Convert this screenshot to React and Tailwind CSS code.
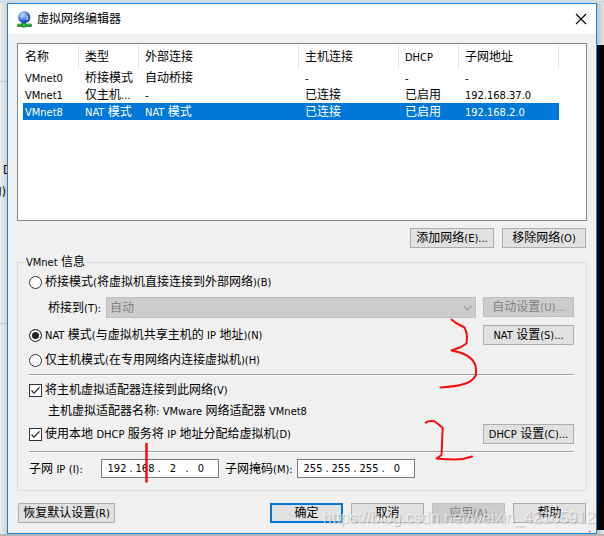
import React, { useState } from 'react'

const COLUMNS = [
  { label: '名称', width: 'w-[56px]' },
  { label: '类型', width: 'w-[60px]' },
  { label: '外部连接', width: 'w-[160px]' },
  { label: '主机连接', width: 'w-[100px]' },
  { label: 'DHCP', width: 'w-[60px]' },
  { label: '子网地址', width: 'w-[100px]' },
]

const NETWORKS = [
  ['VMnet0', '桥接模式', '自动桥接', '-', '-', '-'],
  ['VMnet1', '仅主机...', '-', '已连接', '已启用', '192.168.37.0'],
  ['VMnet8', 'NAT 模式', 'NAT 模式', '已连接', '已启用', '192.168.2.0'],
]

// latin runs are set one size below the chinese ones
function Txt({ children }) {
  return children.split(/([\x21-\x7e]+)/).map((part, i) =>
    i % 2 ? <span key={i} className="text-[11px] leading-none">{part}</span> : part
  )
}

function Button({ children, className = 'w-[84px]', disabled, primary }) {
  const look = disabled
    ? 'border border-[#bfbfbf] bg-[#cccccc] text-[#838383]'
    : primary
      ? 'border-2 border-[#0078d7] bg-[#e1e1e1]'
      : 'border border-[#adadad] bg-[#e1e1e1]'
  return (
    <button disabled={disabled} className={`flex h-5 shrink-0 items-center justify-center whitespace-nowrap ${look} ${className}`}>
      <span><Txt>{children}</Txt></span>
    </button>
  )
}

function Radio({ label, value, mode, setMode }) {
  return (
    <label className="flex h-5 items-center gap-[3px]">
      <input
        type="radio"
        name="mode"
        checked={mode === value}
        onChange={() => setMode(value)}
        className="size-[13px] appearance-none rounded-full border border-[#333333] bg-white checked:bg-[#222222] checked:shadow-[inset_0_0_0_2px_white]"
      />
      <span><Txt>{label}</Txt></span>
    </label>
  )
}

function Checkbox({ label }) {
  return (
    <label className="flex h-5 items-center gap-[3px]">
      <span className="grid size-[13px]">
        <input type="checkbox" defaultChecked className="peer col-start-1 row-start-1 size-[13px] appearance-none border border-[#333333] bg-white" />
        <svg viewBox="0 0 13 13" className="pointer-events-none invisible col-start-1 row-start-1 peer-checked:visible" fill="none" stroke="#222" strokeWidth="1.2">
          <path d="M2.5 6.5 5 9.2 10.6 3.4" />
        </svg>
      </span>
      <span><Txt>{label}</Txt></span>
    </label>
  )
}

function IpField({ id, octets }) {
  return (
    <div className="flex h-[19px] w-[118px] items-center border border-[#7a7a7a] bg-white pl-[3px] text-[11px]">
      {octets.map((o, i) => (
        <React.Fragment key={i}>
          {i > 0 && <span className="w-1 text-center">.</span>}
          <input id={i === 0 ? id : undefined} aria-label={i === 0 ? undefined : `${id}-${i + 1}`} defaultValue={o} className="h-4 w-6 bg-transparent text-center outline-none" />
        </React.Fragment>
      ))}
    </div>
  )
}

function Divider() {
  return <div className="h-[2px] border-t border-b border-t-[#a0a0a0] border-b-white" />
}

function GlobeIcon() {
  return (
    <svg width="15" height="17" viewBox="0 0 15 17">
      <defs>
        <radialGradient id="globe" cx="0.38" cy="0.3" r="0.75">
          <stop offset="0" stopColor="#dcebff" />
          <stop offset="0.35" stopColor="#6f9fe8" />
          <stop offset="0.75" stopColor="#2455b8" />
          <stop offset="1" stopColor="#163a86" />
        </radialGradient>
      </defs>
      <path d="M1 13h4v2.500H1zM10 13h4v2.500h-4z" fill="#fff" stroke="#1c9a2c" strokeWidth="0.8" />
      <path d="M0 14.500h15" stroke="#1c9a2c" strokeWidth="2.200" />
      <path d="M5 12h4v4H5z" fill="#3fc04a" stroke="#14751f" strokeWidth="0.8" />
      <circle cx="7.2" cy="6.3" r="6.1" fill="url(#globe)" />
      <path d="M4 3c2-1.5 3 0 2.5 1.500S5 6.500 4 8C2.500 6.500 2.500 4.500 4 3zM9 5c1.500-1 3 .5 2.500 2.500S9.500 10 9 8.500 8 6 9 5z" fill="#a9c6f5" opacity="0.7" />
    </svg>
  )
}

// handwritten red marks on top of the dialog
function Marks() {
  return (
    <svg width="604" height="536" viewBox="0 0 604 536" className="pointer-events-none absolute top-0 left-0" fill="none" stroke="#f60d0d" strokeWidth="2" strokeLinecap="round" strokeLinejoin="round">
      <path d="M451.500 319.500 456 323 464.500 327.500Q467 332 467 337L466.500 343.500 461 347 451.500 350.500 460 352.500Q476 358 476 370V375Q472 382 464 384 456 386.500 440.500 387.500" />
      <path d="M425.700 422.700Q428 420.500 434.500 421.200L442.700 427.700 441.500 455 436.500 458.500Q446 459.500 455 459.500 464 459.500 472 456.500" />
      <path d="M146.500 443V482.500" strokeWidth="2.500" strokeLinecap="butt" />
      <circle cx="589.500" cy="531.500" r="0.800" fill="#f60d0d" stroke="none" />
    </svg>
  )
}

export default function App() {
  const [mode, setMode] = useState('nat')
  const [selected, setSelected] = useState(2)

  return (
    <div className="relative flex min-h-screen flex-col overflow-hidden bg-[#e6e6e6] font-['DejaVu_Sans_Condensed','Noto_Sans_CJK_SC',sans-serif] text-xs leading-4 text-black">
      <div className="flex h-[3px] flex-col bg-[#dcdfe3]">
        <div className="mt-px h-px bg-[#c4d3e0]" />
      </div>

      <div className="flex flex-1">
        <div className="flex w-[7px] shrink-0 flex-col overflow-hidden bg-linear-to-r from-[#efefef] to-[#d2d2d2]">
          <div className="h-[79px] shrink-0 border-b border-[#c8c8c8]" />
          <div className="mt-[78px] flex h-5 items-center pl-[3px]">D</div>
          <div className="mt-[2px] flex h-5 items-center justify-end whitespace-nowrap pr-px">的)</div>
          <div className="mt-[121px] border-t border-[#c0c0c0]" />
        </div>

        <main className="flex min-w-0 flex-1 flex-col border border-[#1883d7] bg-[#f0f0f0]">
          <header className="flex h-[30px] items-center bg-white pr-[9px] pl-[9px]">
            <GlobeIcon />
            <h1 className="ml-[5px] flex-1">虚拟网络编辑器</h1>
            <button aria-label="关闭">
              <svg width="12" height="12" viewBox="0 0 12 12" fill="none" stroke="#000" strokeWidth="1.1">
                <path d="M1 1 11 11M11 1 1 11" />
              </svg>
            </button>
          </header>

          <div className="flex flex-1 flex-col px-[9px] pt-[9px] pb-[10px]">
            <div className="h-[178px] border border-[#828790] bg-white pt-px pl-[5px]">
              <table className="w-[536px] table-fixed border-separate border-spacing-0 text-left">
                <thead>
                  <tr className="h-6">
                    {COLUMNS.map((c, i) => (
                      <th key={c.label} className={`border-r border-[#e5e5e5] p-0 font-normal ${c.width} ${i === 0 ? 'pl-[2px]' : 'pl-[6px]'}`}>
                        <Txt>{c.label}</Txt>
                      </th>
                    ))}
                  </tr>
                </thead>
                <tbody>
                  {NETWORKS.map((row, r) => (
                    <tr key={row[0]} onClick={() => setSelected(r)} className={`h-[17px] ${r === selected ? 'bg-[#0078d7] text-white' : ''}`}>
                      {row.map((cell, i) => (
                        <td key={i} className={`whitespace-nowrap p-0 pt-px ${i === 0 ? 'pl-[2px]' : 'pl-[6px]'}`}>
                          <Txt>{cell}</Txt>
                        </td>
                      ))}
                    </tr>
                  ))}
                </tbody>
              </table>
            </div>

            <div className="mt-[7px] flex justify-end gap-2 pr-px">
              <Button>添加网络(E)...</Button>
              <Button>移除网络(O)</Button>
            </div>

            <fieldset className="mt-[6px] border border-[#dcdcdc] pr-3 pb-3 pl-[11px]">
              <legend className="-ml-1 h-4 px-px"><Txt>VMnet 信息</Txt></legend>

              <div className="pt-[2px]">
                <Radio label="桥接模式(将虚拟机直接连接到外部网络)(B)" value="bridge" mode={mode} setMode={setMode} />
              </div>
              <div className="mt-[5px] flex pl-[19px]">
                <label htmlFor="bridge-to" className="flex w-[58px] items-center whitespace-nowrap"><span><Txt>桥接到(T):</Txt></span></label>
                <div className="grid flex-1 items-center">
                  <select id="bridge-to" disabled className="col-start-1 row-start-1 h-[21px] w-full appearance-none border border-[#bfbfbf] bg-[#cccccc] pl-[3px] text-[#838383] opacity-100">
                    <option>自动</option>
                  </select>
                  <svg width="9" height="6" viewBox="0 0 9 6" className="pointer-events-none col-start-1 row-start-1 mr-1 justify-self-end" fill="none" stroke="#a0a0a0" strokeWidth="1.2">
                    <path d="M.5 .8 4.500 4.800 8.500 .8" />
                  </svg>
                </div>
                <Button disabled className="ml-[7px] w-[91px]">自动设置(U)...</Button>
              </div>
              <div className="mt-[7px] flex justify-between">
                <Radio label="NAT 模式(与虚拟机共享主机的 IP 地址)(N)" value="nat" mode={mode} setMode={setMode} />
                <Button className="w-[91px]">NAT 设置(S)...</Button>
              </div>
              <div className="mt-[5px] mb-1">
                <Radio label="仅主机模式(在专用网络内连接虚拟机)(H)" value="host" mode={mode} setMode={setMode} />
              </div>

              <Divider />
              <div className="mt-1">
                <Checkbox label="将主机虚拟适配器连接到此网络(V)" />
              </div>
              <p className="mt-[3px] h-4 pl-[19px]"><Txt>主机虚拟适配器名称: VMware 网络适配器 VMnet8</Txt></p>
              <div className="mt-[5px] mb-[7px] flex justify-between">
                <Checkbox label="使用本地 DHCP 服务将 IP 地址分配给虚拟机(D)" />
                <Button className="w-[91px]">DHCP 设置(C)...</Button>
              </div>
              <Divider />

              <div className="mt-[6px] flex items-center whitespace-nowrap">
                <label htmlFor="subnet-ip" className="w-[72px]"><Txt>子网 IP (I):</Txt></label>
                <IpField id="subnet-ip" octets={['192', '168', '2', '0']} />
                <label htmlFor="subnet-mask" className="ml-[6px] w-[72px]"><Txt>子网掩码(M):</Txt></label>
                <IpField id="subnet-mask" octets={['255', '255', '255', '0']} />
              </div>
            </fieldset>

            <div className="mt-3 flex gap-2 px-px">
              <Button className="mr-auto w-[97px]">恢复默认设置(R)</Button>
              <Button primary className="w-[73px]">确定</Button>
              <Button className="w-[73px]">取消</Button>
              <Button disabled className="w-[73px]">应用(A)</Button>
              <Button className="w-[73px]">帮助</Button>
            </div>
          </div>
        </main>

        <div className="flex w-[7px] shrink-0 flex-col bg-linear-to-r from-[#c4c4c4] to-[#e4e4e4]">
          <div className="mt-[42px] mb-1 flex-1 bg-black" />
        </div>
      </div>
      <div className="h-[2px] bg-[#b4b4b4]" />

      <Marks />
      <div className="pointer-events-none absolute right-[9px] bottom-2 font-['Liberation_Sans',Arial,sans-serif] text-base leading-5 text-white/60 [text-shadow:1px_1px_1px_rgb(0_0_0/0.2)]">
        https://blog.csdn.net/weixin_42165912
      </div>
    </div>
  )
}
